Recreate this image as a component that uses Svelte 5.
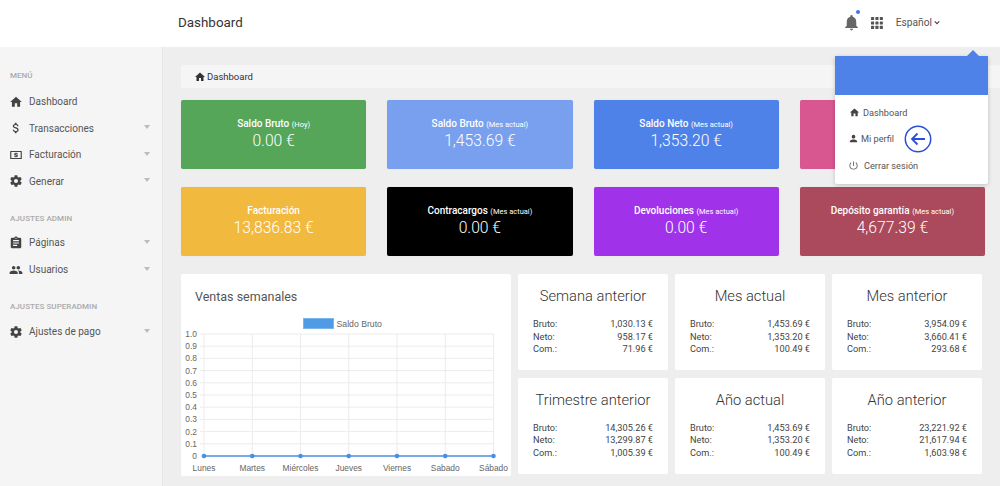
<script>
  const icons = {
    home: 'M10 20v-6h4v6h5v-8h3L12 3 2 12h3v8z',
    dollar: 'M11.8 10.9c-2.27-.59-3-1.2-3-2.15 0-1.09 1.01-1.85 2.7-1.85 1.78 0 2.44.85 2.5 2.1h2.21c-.07-1.72-1.12-3.3-3.21-3.81V3h-3v2.16c-1.94.42-3.5 1.68-3.5 3.61 0 2.31 1.91 3.46 4.7 4.13 2.5.6 3 1.48 3 2.41 0 .69-.49 1.79-2.7 1.79-2.06 0-2.87-.92-2.98-2.1h-2.2c.12 2.19 1.76 3.42 3.68 3.83V21h3v-2.15c1.95-.37 3.5-1.5 3.5-3.55 0-2.84-2.43-3.81-4.7-4.4z',
    bill: 'M3 5h18a1 1 0 0 1 1 1v12a1 1 0 0 1-1 1H3a1 1 0 0 1-1-1V6a1 1 0 0 1 1-1zm1 2v10h16V7zm7 1h2v1h2v1.6h-3.4v.8H15V15h-2v1h-2v-1H9v-1.6h3.4v-.8H9V9h2z',
    gear: 'M19.4 13c.04-.32.1-.66.1-1s-.06-.68-.1-1l2.1-1.65c.19-.15.24-.42.12-.64l-2-3.46c-.12-.22-.39-.3-.61-.22l-2.49 1c-.52-.4-1.08-.73-1.69-.98l-.38-2.65A.49.49 0 0 0 14 2h-4c-.25 0-.46.18-.49.42l-.38 2.65c-.61.25-1.17.59-1.69.98l-2.49-1a.5.5 0 0 0-.61.22l-2 3.46c-.13.22-.07.49.12.64L4.57 11c-.04.32-.07.66-.07 1s.03.68.07 1l-2.11 1.65c-.19.15-.24.42-.12.64l2 3.46c.12.22.39.3.61.22l2.49-1c.52.4 1.08.73 1.69.98l.38 2.65c.03.24.24.42.49.42h4c.25 0 .46-.18.49-.42l.38-2.65c.61-.25 1.17-.59 1.69-.98l2.49 1c.23.09.49 0 .61-.22l2-3.46c.12-.22.07-.49-.12-.64zM12 15.5a3.5 3.5 0 1 1 0-7 3.5 3.5 0 0 1 0 7z',
    clip: 'M19 3h-4.18C14.4 1.84 13.3 1 12 1s-2.4.84-2.82 2H5a2 2 0 0 0-2 2v14c0 1.1.9 2 2 2h14a2 2 0 0 0 2-2V5a2 2 0 0 0-2-2zm-7 0a1 1 0 1 1 0 2 1 1 0 0 1 0-2zm2 14H7v-2h7zm3-4H7v-2h10zm0-4H7V7h10z',
    people: 'M16 11c1.66 0 2.99-1.34 2.99-3S17.66 5 16 5s-3 1.34-3 3 1.34 3 3 3zm-8 0c1.66 0 2.99-1.34 2.99-3S9.66 5 8 5 5 6.34 5 8s1.34 3 3 3zm0 2c-2.33 0-7 1.17-7 3.5V19h14v-2.5C15 14.17 10.33 13 8 13zm8 0c-.29 0-.62.02-.97.05 1.16.84 1.97 1.97 1.97 3.45V19h6v-2.5c0-2.33-4.67-3.5-7-3.5z',
    person: 'M12 12a4 4 0 1 0 0-8 4 4 0 0 0 0 8zm0 2c-2.67 0-8 1.34-8 4v2h16v-2c0-2.66-5.33-4-8-4z',
    power: 'M13 3h-2v10h2zm4.83 2.17-1.42 1.42A6.92 6.92 0 0 1 19 12a7 7 0 1 1-14 0c0-2.17 1-4.1 2.58-5.42L6.17 5.17A8.93 8.93 0 0 0 3 12a9 9 0 0 0 18 0c0-2.74-1.23-5.18-3.17-6.83z',
    bell: 'M12 22c1.1 0 2-.9 2-2h-4c0 1.1.9 2 2 2zm6-6v-5c0-3.07-1.63-5.64-4.5-6.32V4a1.5 1.5 0 0 0-3 0v.68C7.64 5.36 6 7.92 6 11v5l-2 2v1h16v-1z'
  };
  const groups = [
    { label: 'MENÚ', cls: 'g1', items: [['home','Dashboard',false],['dollar','Transacciones',true],['bill','Facturación',true],['gear','Generar',true]] },
    { label: 'AJUSTES ADMIN', cls: 'g2', items: [['clip','Páginas',true],['people','Usuarios',true]] },
    { label: 'AJUSTES SUPERADMIN', cls: 'g3', items: [['gear','Ajustes de pago',true]] }
  ];
  const cards = [
    ['#56a65a','Saldo Bruto','(Hoy)','0.00 €'],
    ['#78a0ee','Saldo Bruto','(Mes actual)','1,453.69 €'],
    ['#4f82e8','Saldo Neto','(Mes actual)','1,353.20 €'],
    ['#d85790','','',''],
    ['#f2b93f','Facturación','','13,836.83 €'],
    ['#000000','Contracargos','(Mes actual)','0.00 €'],
    ['#a033ea','Devoluciones','(Mes actual)','0.00 €'],
    ['#aa4a5c','Depósito garantía','(Mes actual)','4,677.39 €']
  ];
  const stats = [
    ['Semana anterior','1,030.13 €','958.17 €','71.96 €'],
    ['Mes actual','1,453.69 €','1,353.20 €','100.49 €'],
    ['Mes anterior','3,954.09 €','3,660.41 €','293.68 €'],
    ['Trimestre anterior','14,305.26 €','13,299.87 €','1,005.39 €'],
    ['Año actual','1,453.69 €','1,353.20 €','100.49 €'],
    ['Año anterior','23,221.92 €','21,617.94 €','1,603.98 €']
  ];
  const days = ['Lunes','Martes','Miércoles','Jueves','Viernes','Sabado','Sábado'];
  const ticks = ['1.0','0.9','0.8','0.7','0.6','0.5','0.4','0.3','0.2','0.1','0'];
  const x = (i) => 23 + i * 48.25;
  const y = (i) => 16 + i * 12.2;
</script>

<div class="page">
  <header class="top">
    <div class="title">Dashboard</div>
    <div class="tools">
      <span class="bell">
        <svg viewBox="0 0 24 24" width="19" height="19"><path d={icons.bell} /></svg>
        <i class="dot"></i>
      </span>
      <svg class="apps" viewBox="0 0 12 12" width="12" height="12">
        {#each [0,1,2] as r}{#each [0,1,2] as c}<rect x={c*4.4} y={r*4.4} width="3.1" height="3.1" rx="0.5" />{/each}{/each}
      </svg>
      <span class="lang">Español<svg viewBox="0 0 8 6" width="6" height="5"><path d="M1 1.5 4 4.5 7 1.5" fill="none" stroke="#444" stroke-width="1.5" /></svg></span>
    </div>
  </header>

  <div class="body">
    <aside class="side">
      {#each groups as g}
        <div class="group {g.cls}">
          <div class="glabel">{g.label}</div>
          {#each g.items as it}
            <div class="item">
              <svg viewBox="0 0 24 24" width="14" height="14"><path d={icons[it[0]]} /></svg>
              <span class="itext">{it[1]}</span>
              {#if it[2]}<i class="caret"></i>{/if}
            </div>
          {/each}
        </div>
      {/each}
    </aside>

    <main class="main">
      <div class="crumb">
        <svg viewBox="0 0 24 24" width="12" height="12"><path d={icons.home} /></svg>
        <span>Dashboard</span>
      </div>

      <section class="cards">
        {#each cards as c}
          <div class="card" style="background:{c[0]}">
            {#if c[1]}
              <div class="ctitle">{c[1]} <small>{c[2]}</small></div>
              <div class="cvalue">{c[3]}</div>
            {/if}
          </div>
        {/each}
      </section>

      <section class="lower">
        <div class="chart">
          <h3>Ventas semanales</h3>
          <svg class="plot" viewBox="0 0 330 158" width="330" height="158">
            <rect x="122.5" y="0.5" width="30" height="10" fill="#4f9be6" stroke="#7cb5ec" />
            <text x="155.5" y="8.8" class="lg">Saldo Bruto</text>
            {#each ticks as t, i}
              <line x1="19" x2="313" y1={y(i)} y2={y(i)} stroke="#ececec" />
              <text x="16" y={y(i) + 3} class="tick" text-anchor="end">{t}</text>
            {/each}
            {#each days as d, i}
              <line x1={x(i)} x2={x(i)} y1="16" y2="141" stroke="#ececec" />
              <text x={x(i)} y="153" class="tick" text-anchor="middle">{d}</text>
            {/each}
            <line x1={x(0)} x2={x(6)} y1={y(10)} y2={y(10)} stroke="#4a90e2" stroke-width="1.6" />
            {#each days as d, i}
              <circle cx={x(i)} cy={y(10)} r="2.3" fill="#4a90e2" />
            {/each}
          </svg>
        </div>

        <div class="stats">
          {#each stats as s}
            <div class="stat">
              <h4>{s[0]}</h4>
              <div class="row"><span>Bruto:</span><span>{s[1]}</span></div>
              <div class="row"><span>Neto:</span><span>{s[2]}</span></div>
              <div class="row"><span>Com.:</span><span>{s[3]}</span></div>
            </div>
          {/each}
        </div>
      </section>
    </main>
  </div>

  <div class="menu">
    <i class="arrow"></i>
    <div class="mhead"></div>
    <div class="mbody">
      <div class="mitem"><svg viewBox="0 0 24 24" width="11" height="11"><path d={icons.home} /></svg><span>Dashboard</span></div>
      <div class="mitem perfil"><svg viewBox="0 0 24 24" width="11" height="11"><path d={icons.person} /></svg><span>Mi perfil</span></div>
      <div class="mitem cerrar"><svg viewBox="0 0 24 24" width="11" height="11"><path d={icons.power} /></svg><span>Cerrar sesión</span></div>
    </div>
    <svg class="back" viewBox="0 0 28 28" width="28" height="28">
      <circle cx="14" cy="14" r="12.7" fill="#fff" stroke="#2a4fd6" stroke-width="1.5" />
      <path d="M21 14H8M13.5 8.5 8 14l5.5 5.5" fill="none" stroke="#2a4fd6" stroke-width="1.8" />
    </svg>
  </div>
</div>

<style>
  :global(body) { margin: 0; background: #eee; font-family: Roboto, "Liberation Sans", sans-serif; }
  .page { position: relative; width: 1000px; height: 486px; overflow: hidden; color: #444; }
  .top { height: 47px; background: #fff; box-sizing: border-box; padding: 0 60px 2px 178px; display: flex; align-items: center; justify-content: space-between; }
  .title { font-size: 13.4px; color: #333; }
  .tools { display: flex; align-items: center; }
  .bell { position: relative; display: flex; margin-right: 10px; }
  .bell path { fill: #666; }
  .dot { position: absolute; top: -3px; left: 14px; width: 4px; height: 4px; background: #3b78e7; border-radius: 50%; }
  .apps { margin-right: 13px; fill: #555; }
  .lang { font-size: 10.2px; color: #555; display: flex; align-items: center; gap: 2px; }
  .body { display: flex; height: 439px; }
  .side { width: 163px; box-sizing: border-box; background: #f5f5f5; border-right: 1px solid #e6e6e6; padding: 24px 0 0 10px; flex: none; }
  .g1 .glabel { margin-bottom: 7.2px; }
  .g2 { margin-top: 19.3px; }
  .g2 .glabel { margin-bottom: 5.5px; }
  .g3 { margin-top: 19.5px; }
  .glabel { font-size: 8px; font-weight: 500; color: #aaa; line-height: 10px; margin-bottom: 6px; letter-spacing: 0.05px; }
  .item { display: flex; align-items: center; height: 26.67px; padding-right: 12px; }
  .item svg { flex: none; width: 14px; height: 14px; margin-right: 6px; margin-left: -1px; }
  .item path { fill: #444; }
  .itext { font-size: 10px; color: #555; flex: 1; }
  .caret { width: 0; height: 0; border: 3.5px solid transparent; border-top: 4px solid #bbb; border-bottom: 0; margin-top: -2px; }
  .main { flex: 1; padding: 18px 0 0 18px; min-width: 0; }
  .crumb { height: 23px; background: #f5f5f5; border-radius: 2px; display: flex; align-items: center; padding-left: 13px; gap: 1px; font-size: 9.5px; color: #333; }
  .crumb path { fill: #333; }
  .cards { margin-top: 12px; display: grid; grid-template-columns: repeat(4, 185.25px); column-gap: 21px; row-gap: 18px; }
  .card { height: 69px; box-sizing: border-box; padding-bottom: 1px; border-radius: 2px; color: #fff; display: flex; flex-direction: column; align-items: center; justify-content: center; box-shadow: 0 0 1px rgba(0,0,0,.15); }
  .ctitle { font-size: 10px; font-weight: 500; line-height: 13px; }
  .ctitle small { font-size: 7.5px; font-weight: 400; }
  .cvalue { font-size: 15.7px; font-weight: 300; line-height: 20.5px; }
  .lower { margin-top: 18px; display: flex; gap: 7px; }
  .chart { width: 330px; height: 202px; background: #fff; border-radius: 2px; flex: none; overflow: hidden; }
  .chart h3 { margin: 15px 0 0 14px; font-size: 12.5px; font-weight: 400; line-height: 16px; color: #555; }
  .plot { display: block; margin-top: 13px; }
  .lg { font-size: 8.7px; fill: #666; font-family: "Liberation Sans", Arial, sans-serif; }
  .tick { font-size: 8.4px; fill: #666; font-family: "Liberation Sans", Arial, sans-serif; }
  .stats { display: grid; grid-template-columns: repeat(3, 150px); grid-auto-rows: 96px; column-gap: 7px; row-gap: 7.5px; }
  .stat { background: #fff; border-radius: 2px; padding: 14px 15px 0; box-sizing: border-box; }
  .stat h4 { margin: 0 0 13px; font-size: 14.7px; font-weight: 300; line-height: 17px; text-align: center; color: #333; }
  .row { display: flex; justify-content: space-between; font-size: 9.2px; line-height: 12.6px; color: #444; }
  .menu { position: absolute; left: 835px; top: 56px; width: 153px; height: 128px; background: #fff; box-shadow: 0 1px 4px rgba(0,0,0,.2); border-radius: 0 0 2px 2px; }
  .arrow { position: absolute; top: -6px; left: 132px; width: 0; height: 0; border: 6px solid transparent; border-top: 0; border-bottom: 6px solid #4f82e8; }
  .mhead { height: 39px; background: #4f82e8; }
  .mbody { padding: 4px 0 0 14px; }
  .mitem { display: flex; align-items: center; height: 26.5px; font-size: 9.2px; color: #555; gap: 3px; }
  .mitem path { fill: #444; }
  .perfil { margin-left: -1px; gap: 2px; }
  .cerrar { margin-left: -1px; gap: 5px; }
  .cerrar path { fill: #666; }
  .back { position: absolute; left: 68.5px; top: 69px; }
</style>
